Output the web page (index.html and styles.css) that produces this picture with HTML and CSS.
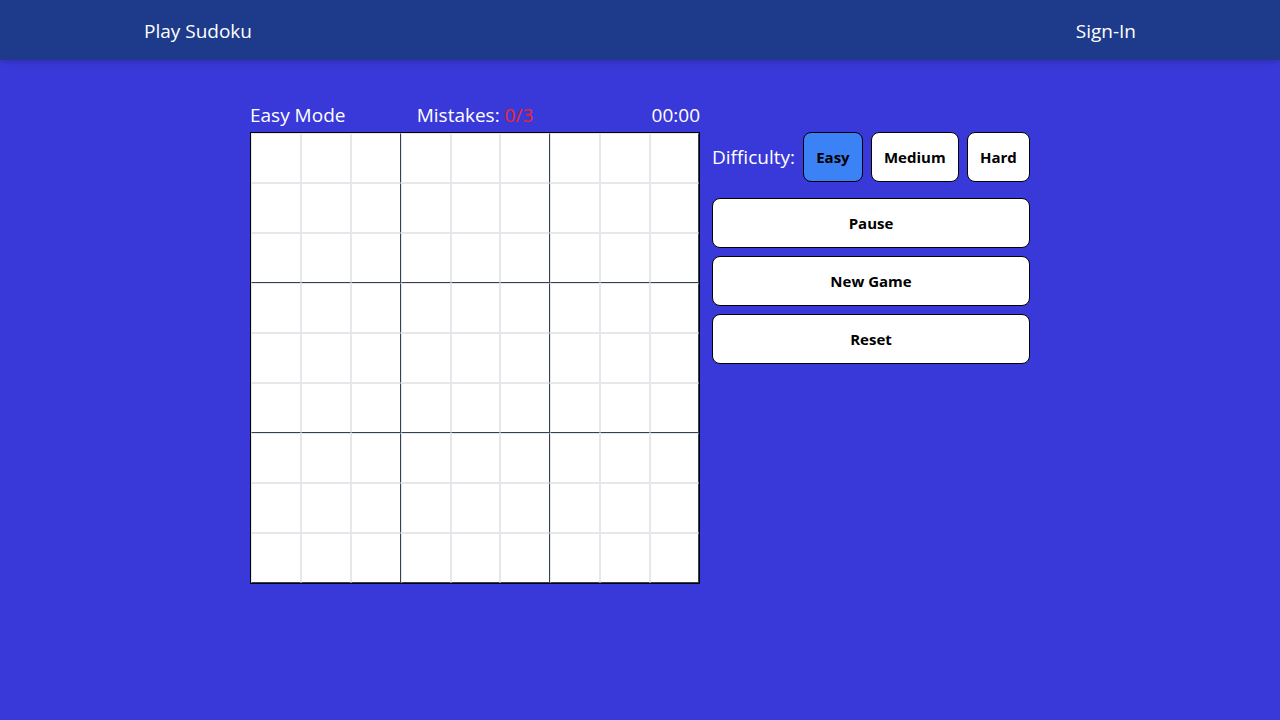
FILE: index.html
```html
<!DOCTYPE html>
<html lang="en">
<head>
<meta charset="utf-8">
<meta name="viewport" content="width=device-width, initial-scale=1">
<title>Play Sudoku</title>
<link rel="stylesheet" href="styles.css">
</head>
<body>
<header class="navbar">
  <nav class="navbar-inner">
    <a class="nav-link" href="#">Play Sudoku</a>
    <a class="nav-link" href="#">Sign-In</a>
  </nav>
</header>
<main class="game">
  <section class="play">
    <div class="status">
      <span>Easy Mode</span>
      <span>Mistakes: <span class="mistakes">0/3</span></span>
      <span class="timer">00:00</span>
    </div>
    <div class="board">
      <div class="cell"></div><div class="cell"></div><div class="cell"></div><div class="cell"></div><div class="cell"></div><div class="cell"></div><div class="cell"></div><div class="cell"></div><div class="cell"></div>
      <div class="cell"></div><div class="cell"></div><div class="cell"></div><div class="cell"></div><div class="cell"></div><div class="cell"></div><div class="cell"></div><div class="cell"></div><div class="cell"></div>
      <div class="cell low"></div><div class="cell low"></div><div class="cell low"></div><div class="cell low"></div><div class="cell low"></div><div class="cell low"></div><div class="cell low"></div><div class="cell low"></div><div class="cell low"></div>
      <div class="cell"></div><div class="cell"></div><div class="cell"></div><div class="cell"></div><div class="cell"></div><div class="cell"></div><div class="cell"></div><div class="cell"></div><div class="cell"></div>
      <div class="cell"></div><div class="cell"></div><div class="cell"></div><div class="cell"></div><div class="cell"></div><div class="cell"></div><div class="cell"></div><div class="cell"></div><div class="cell"></div>
      <div class="cell low"></div><div class="cell low"></div><div class="cell low"></div><div class="cell low"></div><div class="cell low"></div><div class="cell low"></div><div class="cell low"></div><div class="cell low"></div><div class="cell low"></div>
      <div class="cell"></div><div class="cell"></div><div class="cell"></div><div class="cell"></div><div class="cell"></div><div class="cell"></div><div class="cell"></div><div class="cell"></div><div class="cell"></div>
      <div class="cell"></div><div class="cell"></div><div class="cell"></div><div class="cell"></div><div class="cell"></div><div class="cell"></div><div class="cell"></div><div class="cell"></div><div class="cell"></div>
      <div class="cell low"></div><div class="cell low"></div><div class="cell low"></div><div class="cell low"></div><div class="cell low"></div><div class="cell low"></div><div class="cell low"></div><div class="cell low"></div><div class="cell low"></div>
    </div>
  </section>
  <section class="panel">
    <div class="difficulty">
      <span>Difficulty:</span>
      <button class="btn active" type="button">Easy</button>
      <button class="btn" type="button">Medium</button>
      <button class="btn" type="button">Hard</button>
    </div>
    <div class="actions">
      <button class="btn" type="button">Pause</button>
      <button class="btn" type="button">New Game</button>
      <button class="btn" type="button">Reset</button>
    </div>
  </section>
</main>
</body>
</html>
```
FILE: styles.css
```css
* { box-sizing: border-box; }

body {
  margin: 0;
  min-height: 100vh;
  background: #3939d9;
  color: #fff;
  font: 19px/30px "Open Sans", "Noto Sans", sans-serif;
}

.navbar {
  background: #1e3a8a;
  box-shadow: 0 4px 6px -1px rgb(0 0 0 / 10%), 0 2px 4px -2px rgb(0 0 0 / 10%);
}

.navbar-inner {
  display: flex;
  justify-content: space-between;
  max-width: 1024px;
  margin: 0 auto;
  padding: 16px 16px 14px;
}

.nav-link {
  color: #fff;
  text-decoration: none;
}

.game {
  display: flex;
  flex-wrap: wrap;
  justify-content: center;
  gap: 12px;
  padding: 40px 16px;
}

.play {
  flex: 0 1 450px;
}

.status {
  display: grid;
  grid-template-columns: 1fr auto 1fr;
  padding-bottom: 2px;
}

.mistakes { color: #f02828; }
.timer { text-align: right; }

.board {
  display: grid;
  grid-template-columns: 50fr 50fr 50fr 50fr 49fr 50fr 50fr 50fr 49fr;
  grid-auto-rows: 50px;
  border: 1px solid #000;
  background: #fff;
}

.cell { border: 1px solid #e5e7eb; }
.cell:nth-child(3n) { border-right-color: #334155; }
.low { border-bottom-color: #334155; }

.panel {
  flex: 0 1 318px;
  padding-top: 32px;
}

.difficulty {
  display: flex;
  align-items: center;
  gap: 8px;
  margin-bottom: 16px;
}

.difficulty .btn { flex: auto; }

.actions {
  display: grid;
  gap: 8px;
}

.btn {
  padding: 12px;
  border: 1px solid #000;
  border-radius: 8px;
  background: #fff;
  color: #000;
  font: bold 15px/24px "Open Sans", "Noto Sans", sans-serif;
  cursor: pointer;
}

.active { background: #3b82f6; }
```
